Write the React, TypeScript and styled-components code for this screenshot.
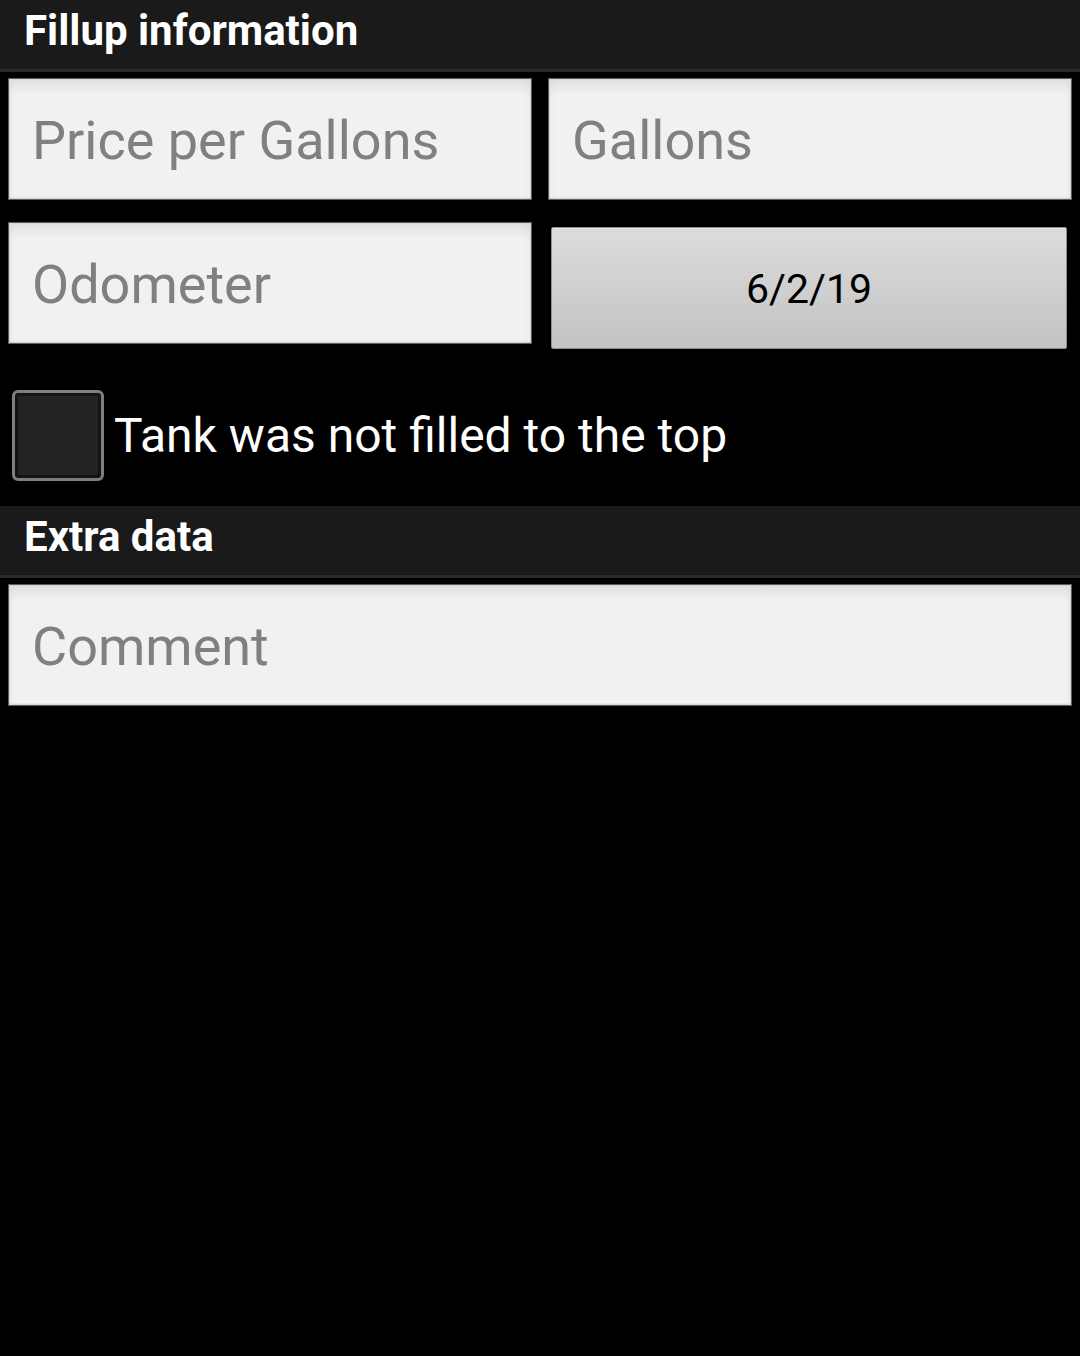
import React from "react";
import styled, { createGlobalStyle } from "styled-components";

const Global = createGlobalStyle`
  html, body {
    margin: 0;
    padding: 0;
    background: #000;
  }
  body {
    font-family: Roboto, "Noto Sans", "Liberation Sans", sans-serif;
    width: 1080px;
    min-height: 1356px;
    background: #000;
  }
  * { box-sizing: border-box; }
`;

const Screen = styled.div`
  width: 1080px;
  min-height: 1356px;
  background: #000;
  display: flex;
  flex-direction: column;
`;

const SectionHeader = styled.div<{ $gap?: number }>`
  height: 72px;
  margin-top: ${(p) => p.$gap ?? 0}px;
  background: #1a1a1a;
  border-bottom: 3px solid #2a2a2a;
  padding: 10px 0 0 24px;
  color: #fff;
  font-family: Roboto, "Liberation Sans", sans-serif;
  font-weight: 700;
  font-size: 42px;
  line-height: 42px;
  letter-spacing: 0;
`;

const FieldGrid = styled.div`
  display: grid;
  grid-template-columns: 524px 524px;
  column-gap: 16px;
  row-gap: 22px;
  padding: 6px 8px 0 8px;
  align-items: start;
`;

const TextField = styled.div<{ $wide?: boolean }>`
  height: 122px;
  ${(p) => (p.$wide ? "margin: 6px 8px 0 8px;" : "")}
  background: linear-gradient(#e0e0e0 0px, #f1f1f1 16px, #f1f1f1 100%);
  border: 1px solid #5e5e5e;
  box-shadow: inset 0 0 0 1px #d6d6d6, inset 6px 0 8px -6px rgba(0, 0, 0, 0.06),
    inset -6px 0 8px -6px rgba(0, 0, 0, 0.06), inset 0 -2px 0 0 #e6e6e6;
  display: flex;
  align-items: center;
  padding-left: 23px;
  padding-top: 2px;
  color: #808080;
  font-family: Roboto, "Liberation Sans", sans-serif;
  font-size: 54px;
  white-space: nowrap;
`;

const DateButton = styled.div`
  height: 122px;
  margin: 5px 5px 0 3px;
  background: linear-gradient(#dcdcdc, #c3c3c3);
  border: 1px solid #8e8e8e;
  border-radius: 2px;
  box-shadow: inset 0 1px 0 #e8e8e8;
  display: flex;
  align-items: center;
  justify-content: center;
  color: #000;
  font-family: Roboto, "Liberation Sans", sans-serif;
  font-size: 41px;
  padding-top: 2px;
`;

const CheckRow = styled.label`
  display: flex;
  align-items: center;
  gap: 10px;
  margin-top: 41px;
  padding-left: 12px;
  color: #fff;
  font-family: Roboto, "Liberation Sans", sans-serif;
  font-size: 48px;
`;

const Box = styled.span`
  width: 92px;
  height: 91px;
  border: 3px solid #7e7e7e;
  border-radius: 6px;
  background: #232323;
  box-shadow: inset 0 0 0 3px #141414;
  flex-shrink: 0;
`;

export default function App() {
  return (
    <Screen>
      <Global />
      <SectionHeader>Fillup information</SectionHeader>
      <FieldGrid>
        <TextField>Price per Gallons</TextField>
        <TextField>Gallons</TextField>
        <TextField>Odometer</TextField>
        <DateButton>6/2/19</DateButton>
      </FieldGrid>
      <CheckRow>
        <Box />
        <span>Tank was not filled to the top</span>
      </CheckRow>
      <SectionHeader $gap={25}>Extra data</SectionHeader>
      <TextField $wide>Comment</TextField>
    </Screen>
  );
}
